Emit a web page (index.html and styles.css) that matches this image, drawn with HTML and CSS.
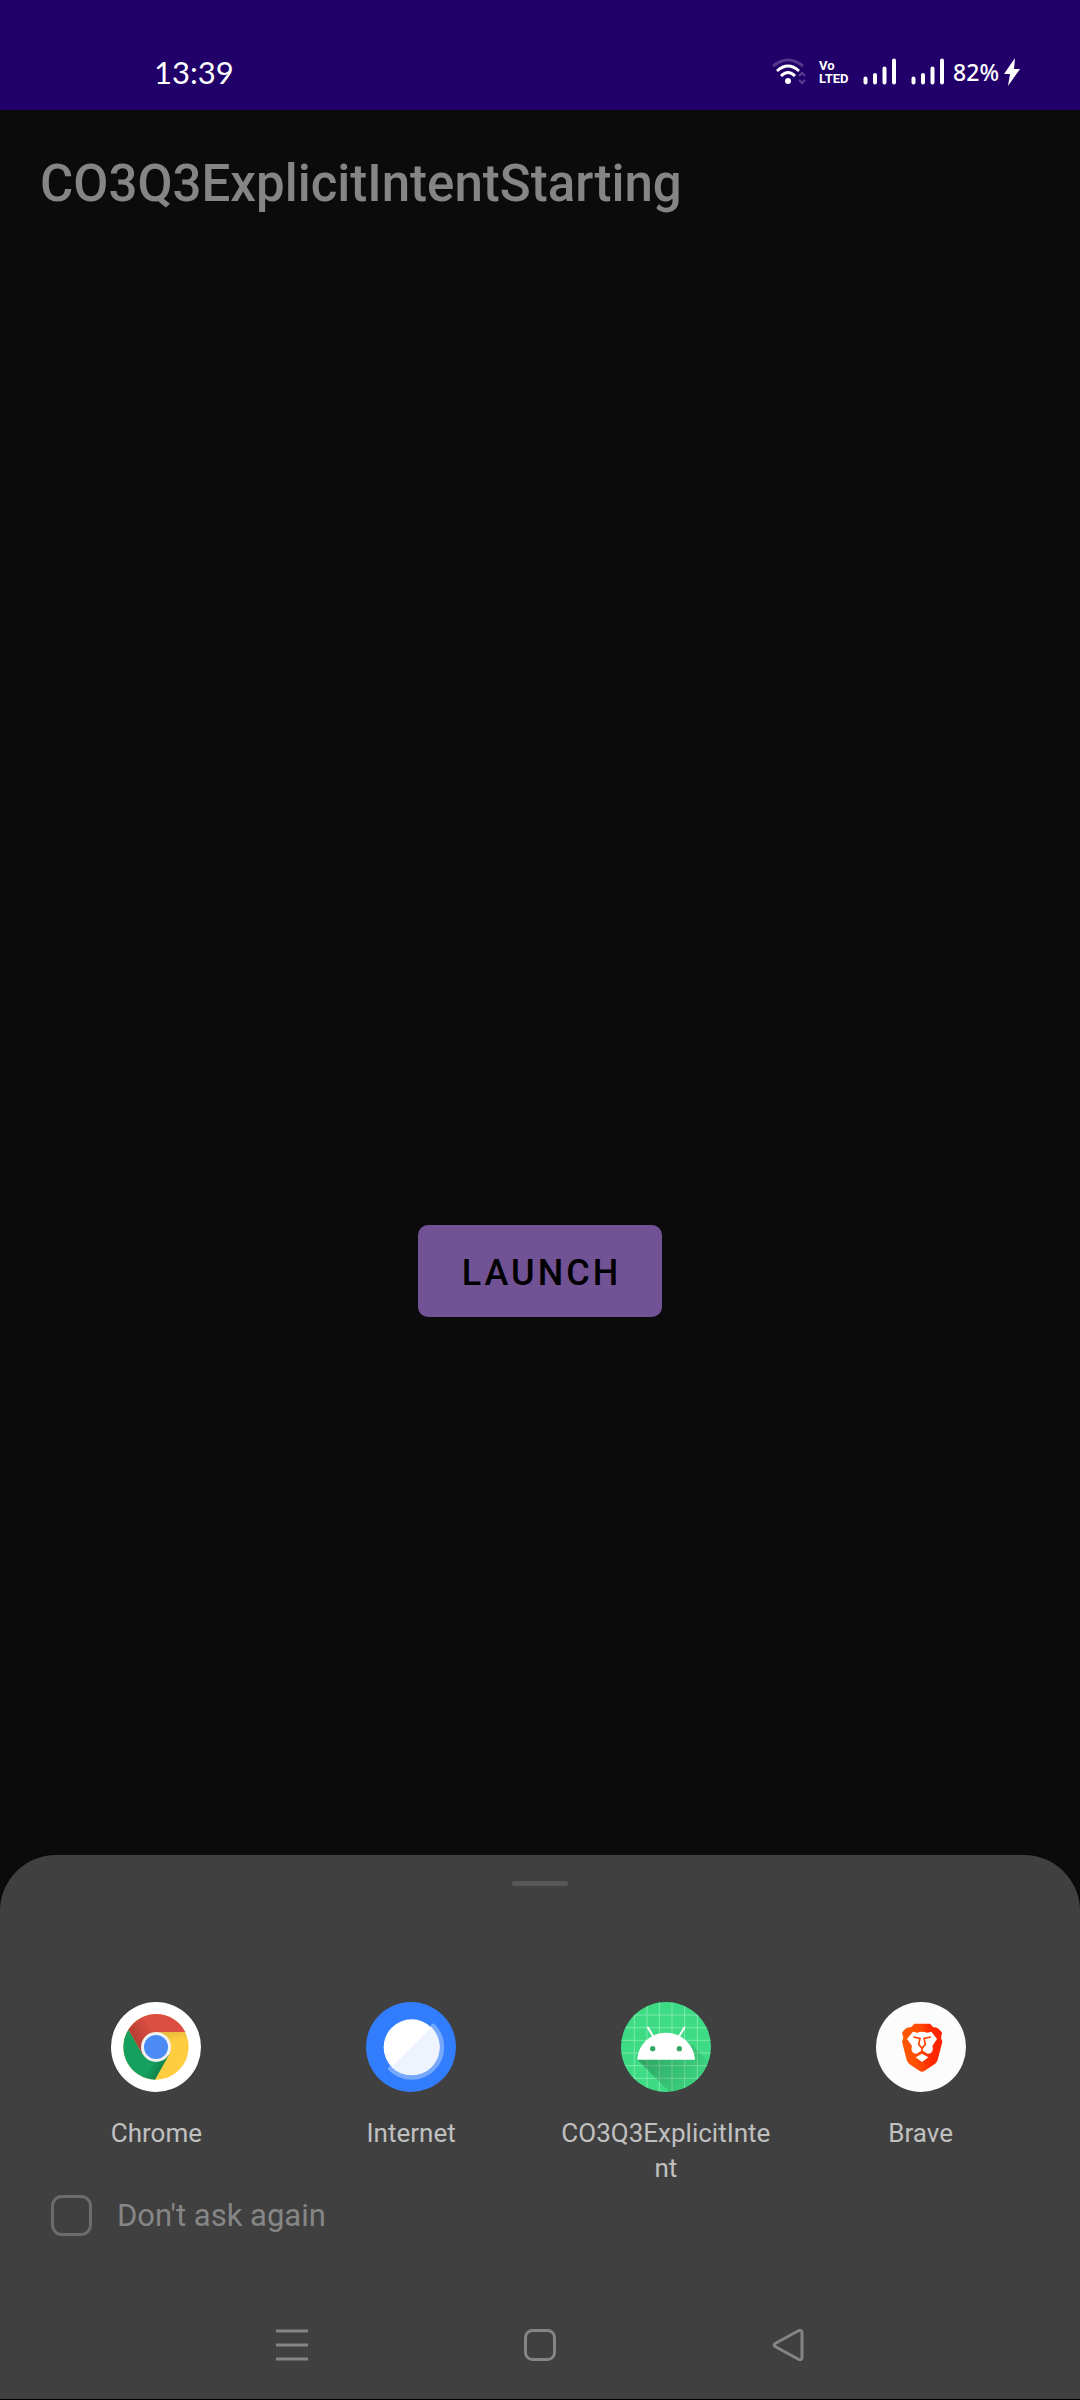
FILE: index.html
```html
<!DOCTYPE html>
<html lang="en">
<head>
<meta charset="utf-8">
<meta name="viewport" content="width=device-width, initial-scale=1">
<title>CO3Q3ExplicitIntentStarting</title>
<link rel="stylesheet" href="styles.css">
</head>
<body>
<div class="status-bar">
  <time class="clock">13:39</time>
  <div class="status-icons">
    <svg class="wifi" viewBox="0 0 34 28" aria-hidden="true">
      <g fill="none" stroke="#fff" stroke-width="3">
        <path d="M1 8Q16 -4 31 8" opacity=".22"/>
        <path d="M5 13Q16 3 27 13"/>
        <path d="M9 18Q16 11 23 18"/>
        <path d="M27 18l3-3 3 3M27 22l3 3 3-3" stroke-width="2" opacity=".25"/>
      </g>
      <circle cx="16" cy="23" r="3" fill="#fff"/>
    </svg>
    <div class="volte"><span>Vo</span><span>LTED</span></div>
    <svg class="signal" viewBox="0 0 34 28" aria-hidden="true"><path d="M2.500 20.500v4M12 17v7.500M21.500 10.500v14M31 2.500v22" stroke="#fff" stroke-width="4" stroke-linecap="round"/></svg>
    <svg class="signal" viewBox="0 0 34 28" aria-hidden="true"><path d="M2.500 20.500v4M12 17v7.500M21.500 10.500v14M31 2.500v22" stroke="#fff" stroke-width="4" stroke-linecap="round"/></svg>
    <span class="battery">82%</span>
    <svg class="bolt" viewBox="0 0 16 30" aria-hidden="true"><path d="M11 1L0 17h6L4 29 16 12h-6z" fill="#fff"/></svg>
  </div>
</div>

<header class="app-bar"><h1>CO3Q3ExplicitIntentStarting</h1></header>

<main class="content"><button class="launch" type="button">LAUNCH</button></main>

<section class="sheet" aria-label="Open with">
  <div class="handle"></div>
  <div class="apps">
    <button class="app" type="button">
      <svg class="app-icon" viewBox="66 66 270 270" aria-hidden="true">
        <defs>
          <linearGradient id="red-shade" gradientUnits="userSpaceOnUse" x1="130" y1="185" x2="190" y2="150"><stop offset="0" stop-color="#b23c31"/><stop offset="1" stop-color="#db4e41"/></linearGradient>
          <linearGradient id="yellow-shade" gradientUnits="userSpaceOnUse" x1="240" y1="155" x2="244" y2="185"><stop offset="0" stop-color="#e8b83b"/><stop offset="1" stop-color="#ffcd40"/></linearGradient>
          <linearGradient id="green-shade" gradientUnits="userSpaceOnUse" x1="225" y1="275" x2="185" y2="252"><stop offset="0" stop-color="#0d7a47"/><stop offset="1" stop-color="#16a05d"/></linearGradient>
        </defs>
        <circle cx="201" cy="201" r="135" fill="#fff"/>
        <circle cx="201" cy="201" r="98" fill="url(#yellow-shade)"/>
        <path d="M118 149L162 224 240 224 198 299A98 98 0 0 1 118 149z" fill="url(#green-shade)"/>
        <path d="M118 149A98 98 0 0 1 289 156H201V201L162 224z" fill="url(#red-shade)"/>
        <circle cx="201" cy="201" r="45" fill="#f1f1f1"/>
        <circle cx="201" cy="201" r="36" fill="#4c8bf5"/>
      </svg>
      <span class="app-name">Chrome</span>
    </button>
    <button class="app" type="button">
      <svg class="app-icon" viewBox="63 66 270 270" aria-hidden="true">
        <circle cx="198" cy="201" r="135" fill="#327dfe"/>
        <path d="M264 138A90 90 0 0 1 136 266" fill="none" stroke="#76a8fc" stroke-width="14" stroke-linecap="round"/>
        <circle cx="200" cy="202" r="84" fill="#fff"/>
        <path d="M259 142A84 84 0 0 1 140 261z" fill="#eef3fe"/>
      </svg>
      <span class="app-name">Internet</span>
    </button>
    <button class="app" type="button">
      <svg class="app-icon" viewBox="213 66 270 270" aria-hidden="true">
        <defs>
          <clipPath id="android-round"><circle cx="348" cy="201" r="135"/></clipPath>
          <linearGradient id="head-shadow" gradientUnits="userSpaceOnUse" x1="300" y1="220" x2="430" y2="320"><stop offset="0" stop-color="#000" stop-opacity=".24"/><stop offset="1" stop-color="#000" stop-opacity=".04"/></linearGradient>
        </defs>
        <g clip-path="url(#android-round)">
          <path d="M213 66h270v270H213z" fill="#3ddc84"/>
          <path d="M253 66v270M291 66v270M328 66v270M366 66v270M404 66v270M442 66v270M213 105h270M213 143h270M213 181h270M213 219h270M213 257h270M213 295h270" stroke="#8aeab5" stroke-width="2.500"/>
          <path d="M262 239L370 347H500V270L425 195z" fill="url(#head-shadow)"/>
        </g>
        <path d="M262 239C264 193 302 158 348 158S432 193 435 239z" fill="#fff"/>
        <path d="M294 143l18 30M403 143l-18 30" stroke="#fff" stroke-width="6" stroke-linecap="round"/>
        <circle cx="308" cy="206" r="8" fill="#33a867"/><circle cx="388" cy="206" r="8" fill="#33a867"/>
      </svg>
      <span class="app-name">CO3Q3ExplicitIntent</span>
    </button>
    <button class="app" type="button">
      <svg class="app-icon" viewBox="75 66 270 270" aria-hidden="true">
        <defs><linearGradient id="mane"><stop offset="0" stop-color="#ff5a00"/><stop offset=".45" stop-color="#ff4a04"/><stop offset=".7" stop-color="#ff2a00"/><stop offset="1" stop-color="#ff2000"/></linearGradient></defs>
        <circle cx="210" cy="201" r="135" fill="#fcfcfc"/>
        <path d="M190 131H237L247 142Q260 140 273 158L270 173 274 185 260 240Q257 249 248 254L220 273Q213 278 206 273L178 254Q170 249 167 240L153 185 157 173 153 158Q166 140 180 142z" fill="url(#mane)"/>
        <path d="M186 155L199 158Q213 153 228 158L241 155 258 177 244 198Q249 212 239 220L230 221 213 211 197 221 188 220Q178 212 183 198L168 177z" fill="#fff"/>
        <path d="M187 171L207 175 203 193 213 205 223 193 219 175 240 171M213 204V214" fill="none" stroke="#ff4200" stroke-width="5"/>
        <path d="M194 232L213 221 232 232 213 246z" fill="#fff"/>
      </svg>
      <span class="app-name">Brave</span>
    </button>
  </div>
  <label class="remember"><input class="tick" type="checkbox">Don't ask again</label>
  <nav class="nav-bar" aria-label="System navigation">
    <button type="button" aria-label="Recent apps"><svg viewBox="0 0 32 32"><path d="M0 2h32M0 16h32M0 30h32"/></svg></button>
    <button type="button" aria-label="Home"><svg viewBox="0 0 32 32"><rect x="1.500" y="1.500" width="29" height="29" rx="7"/></svg></button>
    <button type="button" aria-label="Back"><svg viewBox="0 0 32 32"><path d="M26 2Q30 0 30 4V28Q30 32 26 30L4 18Q0 16 4 14z"/></svg></button>
  </nav>
</section>
</body>
</html>
```
FILE: styles.css
```css
* {
  box-sizing: border-box;
}

body {
  margin: 0;
  min-height: 100vh;
  display: flex;
  flex-direction: column;
  position: relative;
  background: #0b0b0b;
  font-family: Roboto, "Liberation Sans", sans-serif;
}

button {
  border: 0;
  padding: 0;
  background: none;
  color: inherit;
  font: inherit;
}

.status-bar {
  height: 110px;
  padding: 34px 60px 0 154px;
  display: flex;
  align-items: center;
  justify-content: space-between;
  background: #21006a;
  color: #fff;
}

.clock {
  font: 31px/40px Lato, sans-serif;
}

.status-icons {
  display: flex;
  align-items: center;
}

.wifi {
  width: 34px;
  height: 28px;
  margin-right: 13px;
}

.volte {
  width: 32px;
  margin-right: 12px;
  display: flex;
  flex-direction: column;
  font: bold 13px/13px Roboto, "Liberation Sans", sans-serif;
}

.signal {
  width: 34px;
  height: 28px;
  margin-right: 14px;
}

.battery {
  margin-left: -6px;
  margin-right: 5px;
  font: 500 23px/28px "Noto Sans", sans-serif;
}

.bolt {
  width: 16px;
  height: 30px;
}

.app-bar {
  height: 147px;
  padding: 0 40px;
  display: flex;
  align-items: center;
  color: #858585;
}

.app-bar h1 {
  margin: 0;
  font-size: 51px;
  font-weight: 500;
  line-height: 60px;
}

.content {
  flex: 1;
  padding-bottom: 116px;
  display: flex;
  align-items: center;
  justify-content: center;
}

.launch {
  padding: 24px 41px 20px 44px;
  border-radius: 10px;
  background: #715294;
  color: #000;
  font-size: 36px;
  font-weight: 500;
  line-height: 48px;
  letter-spacing: 3px;
}

.sheet {
  position: absolute;
  left: 0;
  right: 0;
  bottom: 0;
  padding-top: 26px;
  border-bottom: 1px solid #000;
  border-radius: 56px 56px 0 0;
  background: #404040;
}

.handle {
  width: 56px;
  height: 5px;
  margin: 0 auto 116px;
  border-radius: 2px;
  background: #575757;
}

.apps {
  padding: 0 32px 0 29px;
  display: grid;
  grid-template-columns: repeat(4, 1fr);
}

.app {
  min-width: 0;
  padding: 0 20px;
  display: flex;
  flex-direction: column;
  align-items: center;
  gap: 24px;
  color: #c0c0c0;
  font-size: 26px;
  line-height: 35px;
}

.app-icon {
  width: 90px;
  height: 90px;
}

.app-name {
  max-width: 100%;
  overflow-wrap: anywhere;
}

.remember {
  padding: 9px 51px 0;
  display: flex;
  align-items: center;
  gap: 25px;
  color: #868686;
  font-size: 31px;
  line-height: 41px;
}

.tick {
  appearance: none;
  width: 41px;
  height: 41px;
  margin: 0;
  border: 3px solid #6c6c6c;
  border-radius: 11px;
}

.nav-bar {
  padding: 93px 0 38px;
  display: grid;
  grid-template-columns: repeat(3, 23%);
  justify-content: center;
  justify-items: center;
}

.nav-bar svg {
  display: block;
  width: 32px;
  height: 32px;
  fill: none;
  stroke: #858585;
  stroke-width: 3;
}
```
